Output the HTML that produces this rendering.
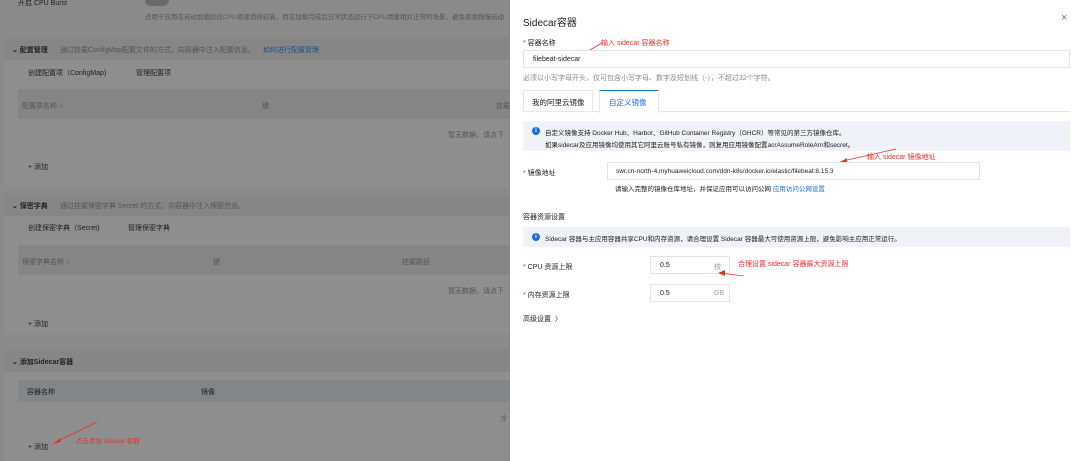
<!DOCTYPE html>
<html><head><meta charset="utf-8"><style>
*{margin:0;padding:0;box-sizing:border-box}
body{width:1080px;height:461px;overflow:hidden;position:relative;font-family:"Liberation Sans","Noto Sans CJK SC",sans-serif;background:#8d8d8d;font-size:7px;color:#2a2a2a}
.a{position:absolute;white-space:nowrap}
.L{color:#222}
.g{color:#555}
.red{color:#e8302a}
.blue{color:#1a6fd8}
.box{position:absolute;border:1px solid #e3e3e3;background:#fff}
.star{color:#e8302a}
</style></head><body>
<div class="a" style="left:0;top:0;width:510px;height:461px;background:#8a8a8a"></div>
<div class="a" style="left:4px;top:38px;width:506px;height:148px;background:#8e8e8e"></div>
<div class="a" style="left:4px;top:38px;width:506px;height:22px;background:#868686"></div>
<div class="a" style="left:4px;top:194px;width:506px;height:140px;background:#8e8e8e"></div>
<div class="a" style="left:4px;top:194px;width:506px;height:22px;background:#868686"></div>
<div class="a" style="left:4px;top:350px;width:506px;height:111px;background:#8e8e8e"></div>
<div class="a" style="left:4px;top:350px;width:506px;height:22px;background:#868686"></div>
<div class="a" style="left:18px;top:89px;width:492px;height:30px;background:#858585"></div>
<div class="a" style="left:18px;top:245px;width:492px;height:30px;background:#858585"></div>
<div class="a" style="left:18px;top:380px;width:492px;height:22px;background:#838588"></div>
<div class="a" style="left:145px;top:-6px;width:24px;height:12px;border-radius:6px;background:#6a6a6a"></div>
<div class="a L" style="left:18px;top:-2px">开启 CPU Burst</div>
<div class="a g" style="left:145px;top:11px;font-size:6.5px">适用于应用在启动加载阶段CPU资源消耗较高，而在加载完成后日常状态运行下CPU用量相对正常的场景，避免资源拖慢启动</div>
<div class="a L" style="left:12px;top:45px;font-weight:bold">⌄ 配置管理</div>
<div class="a g" style="left:60px;top:45px">通过挂载ConfigMap配置文件的方式，向容器中注入配置信息。</div>
<div class="a" style="left:263px;top:45px;color:#1f4f8a">如何进行配置管理</div>
<div class="a L" style="left:28px;top:68px">创建配置项（ConfigMap)</div>
<div class="a L" style="left:136px;top:68px">管理配置项</div>
<div class="a g" style="left:22px;top:101px">配置项名称 ○</div>
<div class="a g" style="left:262px;top:101px">键</div>
<div class="a g" style="left:496px;top:101px">挂载</div>
<div class="a g" style="left:448px;top:130px">暂无数据，请点下</div>
<div class="a L" style="left:28px;top:162px">+ 添加</div>
<div class="a L" style="left:12px;top:201px;font-weight:bold">⌄ 保密字典</div>
<div class="a g" style="left:60px;top:201px">通过挂载保密字典 Secret 的方式，向容器中注入保密信息。</div>
<div class="a L" style="left:28px;top:223px">创建保密字典（Secret)</div>
<div class="a L" style="left:128px;top:223px">管理保密字典</div>
<div class="a g" style="left:22px;top:257px">保密字典名称 <span style="color:#2a5a9a">○</span></div>
<div class="a g" style="left:213px;top:257px">键</div>
<div class="a g" style="left:402px;top:257px">挂载路径</div>
<div class="a g" style="left:448px;top:286px">暂无数据，请点下</div>
<div class="a L" style="left:28px;top:319px">+ 添加</div>
<div class="a L" style="left:12px;top:357px;font-weight:bold">⌄ 添加Sidecar容器</div>
<div class="a L" style="left:27px;top:387px">容器名称</div>
<div class="a L" style="left:201px;top:387px">镜像</div>
<div class="a g" style="left:500px;top:414px">冷</div>
<div class="a L" style="left:28px;top:442px">+ 添加</div>
<div class="a red" style="left:76px;top:435px;font-size:6.5px">点击添加 sidecar 容器</div>
<svg class="a" style="left:50px;top:420px" width="50" height="30"><line x1="47" y1="2" x2="6" y2="22" stroke="#e8302a" stroke-width="0.8"/><path d="M3 24 L10 18 L11 22Z" fill="#e8302a"/></svg>

<div class="a" style="left:510px;top:0;width:570px;height:461px;background:#fff"></div>
<div class="a" style="left:523px;top:14px;font-size:10px;color:#222">Sidecar容器</div>
<div class="a" style="left:1061px;top:12px;font-size:11px;color:#777">×</div>
<div class="a L" style="left:523px;top:38px"><span class="star">* </span>容器名称</div>
<div class="a red" style="left:601px;top:38px">输入 sidecar 容器名称</div>
<svg class="a" style="left:580px;top:42px" width="24" height="14"><line x1="22" y1="1" x2="5" y2="11" stroke="#e8302a" stroke-width="0.8"/><path d="M2 13 L8 8 L9 12Z" fill="#e8302a"/></svg>
<div class="box" style="left:523px;top:50px;width:547px;height:18px"></div>
<div class="a L" style="left:533px;top:56px">filebeat-sidecar</div>
<div class="a g" style="left:523px;top:73px;color:#888">必须以小写字母开头，仅可包含小写字母、数字及短划线（-），不超过32个字符。</div>
<div class="a" style="left:523px;top:90px;width:547px;height:22px;border-bottom:1px solid #e6e6e6"></div>
<div class="a" style="left:523px;top:90px;width:70px;height:22px;border:1px solid #e6e6e6;border-bottom:none"></div>
<div class="a" style="left:599px;top:90px;width:60px;height:23px;border:1px solid #e6e6e6;border-top:1px solid #1a6fd8;border-bottom:none;background:#fff"></div>
<div class="a L" style="left:532px;top:97px;font-size:7.5px">我的阿里云镜像</div>
<div class="a blue" style="left:609px;top:97px;font-size:7.5px">自定义镜像</div>
<div class="a" style="left:523px;top:121px;width:547px;height:30px;background:#eff2f6"></div>
<div class="a" style="left:532px;top:127px;width:8px;height:8px;border-radius:50%;background:#1a6fd8;color:#fff;font-size:6px;text-align:center;line-height:8px;font-weight:bold">i</div>
<div class="a L" style="left:545px;top:127px;font-size:6.5px">自定义镜像支持 Docker Hub、Harbor、GitHub Container Registry（GHCR）等常见的第三方镜像仓库。</div>
<div class="a L" style="left:545px;top:139px;font-size:6.5px">如果sidecar及应用镜像均使用其它阿里云账号私有镜像，则复用应用镜像配置acrAssumeRoleArn和secret。</div>
<div class="a red" style="left:867px;top:152px">输入 sidecar 镜像地址</div>
<svg class="a" style="left:838px;top:148px" width="60" height="16"><line x1="58" y1="1" x2="5" y2="13" stroke="#e8302a" stroke-width="0.8"/><path d="M2 14 L9 10 L9 14Z" fill="#e8302a"/></svg>
<div class="a L" style="left:523px;top:168px"><span class="star">* </span>镜像地址</div>
<div class="box" style="left:607px;top:162px;width:373px;height:18px"></div>
<div class="a L" style="left:616px;top:168px;font-size:6.5px">swr.cn-north-4.myhuaweicloud.com/ddn-k8s/docker.io/elastic/filebeat:8.15.3</div>
<div class="a L" style="left:615px;top:183px;font-size:6.5px">请输入完整的镜像仓库地址，并保证应用可以访问公网 <span class="blue">应用访问公网设置</span></div>
<div class="a L" style="left:523px;top:212px">容器资源设置</div>
<div class="a" style="left:523px;top:227px;width:547px;height:20px;background:#eff2f6"></div>
<div class="a" style="left:532px;top:233px;width:8px;height:8px;border-radius:50%;background:#1a6fd8;color:#fff;font-size:6px;text-align:center;line-height:8px;font-weight:bold">i</div>
<div class="a L" style="left:545px;top:233px;font-size:6.5px">Sidecar 容器与主应用容器共享CPU和内存资源，请合理设置 Sidecar 容器最大可使用资源上限，避免影响主应用正常运行。</div>
<div class="a L" style="left:523px;top:262px"><span class="star">* </span>CPU 资源上限</div>
<div class="box" style="left:650px;top:256px;width:80px;height:18px"></div>
<div class="a L" style="left:660px;top:262px">0.5</div>
<div class="a g" style="left:714px;top:262px;color:#999">核</div>
<div class="a red" style="left:738px;top:259px">合理设置 sidecar 容器最大资源上限</div>
<svg class="a" style="left:716px;top:268px" width="30" height="10"><line x1="28" y1="8" x2="5" y2="5" stroke="#e8302a" stroke-width="0.8"/><path d="M2 5 L9 2 L9 8Z" fill="#e8302a"/></svg>
<div class="a L" style="left:523px;top:290px"><span class="star">* </span>内存资源上限</div>
<div class="box" style="left:650px;top:284px;width:80px;height:18px"></div>
<div class="a L" style="left:660px;top:290px">0.5</div>
<div class="a g" style="left:714px;top:290px;color:#999">GB</div>
<div class="a L" style="left:523px;top:314px">高级设置 &nbsp;〉</div>
</body></html>
